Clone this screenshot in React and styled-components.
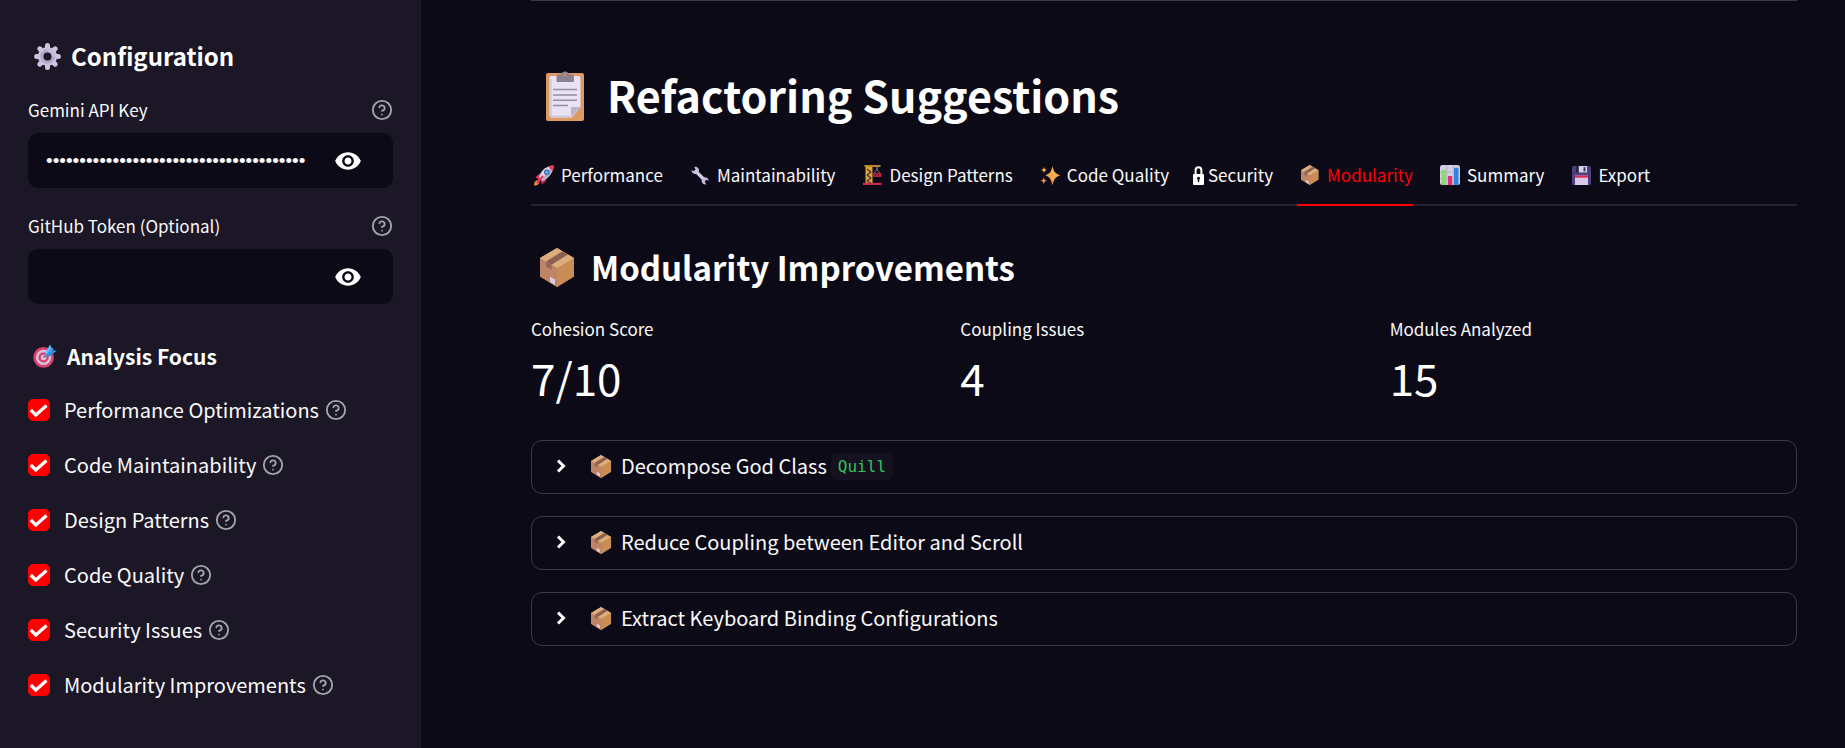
import React, { useId, useState } from "react";
import styled, { createGlobalStyle } from "styled-components";
import { MdVisibility } from "react-icons/md";

const color = {
  page: "#0d0a18",
  panel: "#1b1727",
  text: "#fafafa",
  heading: "#ffffff",
  line: "#252330",
  border: "#3d3a48",
  accent: "#ff0000",
  muted: "#a5a3ab",
  code: "#2fc45c",
};

const sans = `"Noto Sans CJK SC", "Noto Sans", sans-serif`;
const mono = `"DejaVu Sans Mono", monospace`;

const GlobalStyle = createGlobalStyle`
  *, *::before, *::after { box-sizing: border-box; }
  body {
    margin: 0;
    background: ${color.page};
    color: ${color.text};
    font-family: ${sans};
    font-size: 20px;
  }
  button, input { font: inherit; color: inherit; }
`;

/* ---------- layout ---------- */

const Page = styled.div`
  display: grid;
  grid-template-columns: 421px minmax(0, 1fr);
  min-height: 100vh;
`;

const Sidebar = styled.aside`
  background: ${color.panel};
  padding: 41px 28px 28px;
`;

const Main = styled.main`
  padding: 0 48px 48px 110px;
`;

const Divider = styled.hr`
  margin: 0 0 63px;
  border: 0;
  border-top: 1px solid ${color.border};
`;

/* ---------- headings ---------- */

const Title = styled.h1`
  display: flex;
  align-items: center;
  gap: 8px;
  margin: 0 0 22px;
  font-size: 43px;
  line-height: 60px;
  font-weight: 700;
  color: ${color.heading};
`;

const SectionTitle = styled.h2`
  display: flex;
  align-items: center;
  gap: 8px;
  margin: 39px 0 27px;
  font-size: 33px;
  line-height: 44px;
  font-weight: 700;
  color: ${color.heading};
`;

const SideTitle = styled.h2`
  display: flex;
  align-items: center;
  gap: 4px;
  margin: 0 0 26px;
  font-size: 24px;
  line-height: 30px;
  font-weight: 700;
  color: ${color.heading};
`;

const SideSubtitle = styled(SideTitle).attrs({ as: "h3" })`
  gap: 5px;
  margin: 37px 0 22px;
  font-size: 21px;
`;

const EmojiBox = styled.span`
  display: inline-flex;
  flex: none;
  align-items: center;
  justify-content: center;
  width: ${(p) => p.$box}px;

  svg {
    display: block;
    height: ${(p) => p.$height}px;
    width: auto;
  }
`;

/* ---------- sidebar controls ---------- */

const FieldList = styled.div`
  display: grid;
  gap: 25px;
`;

const Field = styled.div`
  display: grid;
  gap: 10px;
`;

const FieldHead = styled.div`
  display: flex;
  align-items: center;
  justify-content: space-between;
  height: 26px;
`;

const FieldLabel = styled.label`
  font-size: 17px;
  line-height: 26px;
`;

const InputBox = styled.div`
  display: flex;
  align-items: center;
  height: 55px;
  padding: 0 31px 0 18px;
  border-radius: 10px;
  background: ${color.page};
`;

const SecretInput = styled.input`
  flex: 1;
  min-width: 0;
  padding: 0;
  border: 0;
  outline: 0;
  background: transparent;
  font-family: "Liberation Sans", sans-serif;
  font-size: 19px;
  line-height: 30px;
`;

const IconButton = styled.button`
  display: inline-flex;
  flex: none;
  padding: 0;
  border: 0;
  background: transparent;
  color: ${(p) => (p.$muted ? color.muted : color.heading)};
  cursor: pointer;
`;

const CheckList = styled.div`
  display: grid;
  gap: 22px;
`;

const CheckRow = styled.div`
  display: flex;
  align-items: center;
  gap: 6px;
  height: 33px;
`;

const CheckLabel = styled.label`
  display: flex;
  align-items: center;
  gap: 14px;
  line-height: 33px;
  cursor: pointer;
`;

const CheckMark = styled.span`
  display: grid;
  width: 22px;
  height: 22px;

  > * {
    grid-area: 1 / 1;
  }

  svg {
    pointer-events: none;
  }
`;

const CheckInput = styled.input`
  appearance: none;
  width: 22px;
  height: 22px;
  margin: 0;
  border: 1px solid ${color.border};
  border-radius: 5px;
  background: ${color.page};

  &:checked {
    border-color: ${color.accent};
    background: ${color.accent};
  }

  &:not(:checked) + svg {
    display: none;
  }
`;

/* ---------- tabs ---------- */

const TabList = styled.div`
  display: flex;
  gap: 24px;
  box-shadow: inset 0 -2px ${color.line};
`;

const Tab = styled.button`
  display: flex;
  align-items: center;
  gap: 4px;
  padding: 16px 0;
  border: 0;
  border-bottom: 2px solid ${(p) => (p.$active ? color.accent : "transparent")};
  background: transparent;
  color: ${(p) => (p.$active ? color.accent : color.text)};
  font-size: 17px;
  line-height: 26px;
  white-space: nowrap;
  cursor: pointer;
`;

/* ---------- metrics ---------- */

const Metrics = styled.dl`
  display: grid;
  grid-template-columns: repeat(3, minmax(0, 1fr));
  gap: 22px;
  margin: 0 0 36px;
`;

const Metric = styled.div`
  display: grid;
  gap: 8px;
`;

const MetricLabel = styled.dt`
  font-size: 17px;
  line-height: 26px;
`;

const MetricValue = styled.dd`
  margin: 0;
  font-size: 44px;
  line-height: 54px;
  color: ${color.heading};
`;

/* ---------- expanders ---------- */

const Suggestions = styled.div`
  display: grid;
  gap: 22px;
`;

const Expander = styled.details`
  border: 1px solid ${color.border};
  border-radius: 11px;
`;

const ExpanderHead = styled.summary`
  display: flex;
  align-items: center;
  gap: 4px;
  padding: 10px 16px 12px;
  line-height: 30px;
  list-style: none;
  cursor: pointer;
`;

const Chevron = styled.svg`
  flex: none;
  width: 26px;
  height: 26px;
  margin-right: 8px;
  fill: none;
  stroke: ${color.heading};
  stroke-width: 3px;

  details[open] & {
    transform: rotate(90deg);
  }
`;

const Code = styled.code`
  padding: 0 7px;
  border-radius: 6px;
  background: #15111f;
  color: ${color.code};
  font-family: ${mono};
  font-size: 16px;
  line-height: 27px;
`;

/* ---------- drawings ---------- */

const GearIcon = () => (
  <svg viewBox="0 0 27 27" aria-hidden="true">
    <g stroke="#cfc3e2" strokeWidth="5" strokeLinecap="round">
      <path d="M13.5 2.6v21.8M2.6 13.5h21.8M5.8 5.8l15.4 15.4M21.2 5.8L5.8 21.2" />
    </g>
    <circle cx="13.5" cy="13.5" r="9.6" fill="#cdc1df" />
    <circle cx="13.5" cy="13.5" r="7.2" fill="#b3a6c6" />
    <path d="M13.5 6.3a7.2 7.2 0 0 1 7.2 7.2h-7.2z" fill="#c6bad8" />
    <circle cx="13.5" cy="13.5" r="4" fill={color.panel} />
  </svg>
);

const TargetIcon = () => (
  <svg viewBox="0 0 25 25" aria-hidden="true">
    <circle cx="11" cy="14" r="10.8" fill="#d9416f" />
    <circle cx="11" cy="14" r="8" fill="#d6c4dc" />
    <circle cx="11" cy="14" r="5.4" fill="#d9416f" />
    <circle cx="11" cy="14" r="2.9" fill="#d6c4dc" />
    <path d="M11 14l7-7" stroke="#4a6d96" strokeWidth="1.6" />
    <path d="M12.6 9.8L17.8.6l1.4 3.6L13 12.6z" fill="#5ec0ff" />
    <path d="M13 12.6l6.2-6.4 5.6.8-7.6 6z" fill="#2e8fe6" />
    <path d="M13 12l6.8-8.6 1.6 2z" fill="#46a5f5" />
  </svg>
);

const ClipboardIcon = () => (
  <svg viewBox="0 -3 38 53" aria-hidden="true">
    <rect y="2" width="38" height="48" rx="2" fill="#dd9a62" />
    <path d="M3.5 7a2 2 0 0 1 2-2h27a2 2 0 0 1 2 2v29L26 46.500H5.500a2 2 0 0 1-2-2z" fill="#e8e2f4" />
    <path d="M3.500 8v36.500a2 2 0 0 0 2 2H24v-2H7a2 2 0 0 1-1.500-2V8z" fill="#cfc6e2" />
    <path d="M34.500 36L25 46.500V37a1 1 0 0 1 1-1z" fill="#bdb3ce" />
    <path d="M10.500 11V6.500a3 3 0 0 1 3-3H15A4.200 4.200 0 0 1 23 3.500h2a3 3 0 0 1 3 3V11z" fill="#8c818f" />
    <circle cx="19" cy="3.600" r="1.600" fill="#c58e68" />
    <path d="M7 18.500h24M7 24h24M7 29.300h24M7 34.500h15" stroke="#968ca3" strokeWidth="1.600" />
  </svg>
);

const PackageIcon = () => (
  <svg viewBox="0 0 34 39" aria-hidden="true">
    <path d="M17 0l17 10v18.500L17 39 0 28.500V10z" fill="#c58a5c" />
    <path d="M0 10l17 10v19L0 28.500z" fill="#bd8466" />
    <path d="M17 20l17-10v18.500L17 39z" fill="#c98c55" />
    <path d="M17 0l17 10-17 10L0 10z" fill="#dcae7e" />
    <path d="M22.500 3.200l5.500 3.300-16.500 10.300L6 13.500z" fill="#8c6051" />
    <path d="M6 13.500l5.500 3.300v5L6 18.500z" fill="#94695a" />
    <path d="M10 28.500l5 3v5.500l-5-3z" fill="#ddcbdc" />
  </svg>
);

const RocketIcon = () => (
  <svg viewBox="0 0 20 21" aria-hidden="true">
    <path d="M1.500 12L6 8.500l3.500 2-4 5z" fill="#e8315e" />
    <path d="M8 19.500l4-3.500-.5-4.500-5 4z" fill="#c22a58" />
    <path d="M0 20.500c0-3 1-5 3.500-5.500l2 2C5 19.500 3 21 0 20.500z" fill="#f2852f" />
    <path d="M5 12C7 6 11 2 17 .8L19.300 3C18 9 14 13.500 8.500 16z" fill="#d9d4e6" />
    <path d="M8.500 16C14 13.500 18 9 19.300 3l-1.200-1.200L7 14.500z" fill="#b5aecb" />
    <path d="M14 1.700C15.800.8 18 .2 20 .3c0 1.900-.5 4-1.300 5.700z" fill="#f03b61" />
    <circle cx="12.800" cy="7.200" r="2.700" fill="#3b5f96" />
    <circle cx="12.800" cy="7.200" r="1.700" fill="#5db1f5" />
    <path d="M3.500 17.500l5-6" stroke="#e8315e" strokeWidth="2" strokeLinecap="round" />
  </svg>
);

const WrenchIcon = () => (
  <svg viewBox="0 0 18 19" aria-hidden="true">
    <path d="M5 5.500l8.500 8.500" stroke="#d5cbe6" strokeWidth="3.200" />
    <path
      d="M3.200.8C5.500.3 7.800 1.600 8 4.200 8.200 6.500 6.500 8 4.600 8 2.500 8 .6 6.500.3 4L2.800 5.300 4.600 3.600z"
      fill="#cdc3df"
    />
    <path
      d="M15.200 18.500C12.500 18.600 10.600 17 10.600 14.800c0-2 1.400-3.500 3.400-3.500 2 0 3.500 1.300 3.700 3.500l-2.200-1-1.800 1.800z"
      fill="#c6bbda"
    />
  </svg>
);

const CraneIcon = () => (
  <svg viewBox="0 0 19 20" aria-hidden="true">
    <path d="M1.500 0h16v2h-16z" fill="#b98a2d" />
    <path d="M3 2h6v16H3z" fill="#e0a436" />
    <path d="M4 4l4 3-4 3 4 3-4 3 4 2" stroke="#4b3140" strokeWidth="1.300" fill="none" />
    <path d="M3 2v16M9 2v16" stroke="#dba33b" strokeWidth="1" />
    <path d="M14 2v3" stroke="#8d86a0" strokeWidth="1.200" />
    <path d="M14 4.500l-3.200 4h6.400z" stroke="#77708c" fill="none" />
    <path d="M10 8h8.500v4H10z" fill="#b3213f" />
    <path d="M12.500 9v2M15.500 9v2" stroke="#6f1730" />
    <path d="M0 17.800h18.500V20H0z" fill="#c72d4a" />
  </svg>
);

const SparklesIcon = () => (
  <svg viewBox="0 0 20 19" aria-hidden="true">
    <path d="M12.500 0c1 5 2.500 7.700 7.500 9.200-5 1.500-6.500 4.800-7.500 9.800-1-5-2.300-8.300-7-9.800 4.700-1.500 6-4.200 7-9.200z" fill="#fbb154" />
    <path d="M12.500 19c-1-5-2.300-8.300-7-9.800H20c-5 1.500-6.500 4.800-7.500 9.800z" fill="#f79a52" />
    <path d="M12.500 4c.5 3 1.500 4.500 4 5.200-2.500.8-3.500 2.800-4 5.800-.5-3-1.500-5-4-5.800 2.500-.7 3.500-2.200 4-5.200z" fill="#f9ab54" />
    <path d="M4 .8c.4 1.900.9 2.700 3 3.200-2.100.5-2.600 1.300-3 3.200-.4-1.900-.9-2.700-3-3.200 2.100-.5 2.600-1.300 3-3.200z" fill="#f6ae4e" />
    <path d="M3.800 11.200c.4 2.100.9 3 3 3.500-2.100.5-2.600 1.400-3 3.500-.4-2.100-.9-3-3.300-3.500 2.400-.5 2.900-1.400 3.300-3.500z" fill="#f08a55" />
  </svg>
);

const LockIcon = () => (
  <svg viewBox="0 0 11 19" aria-hidden="true">
    <path d="M2.600 9V4.200a2.900 2.900 0 0 1 5.800 0V9" stroke="#fff" strokeWidth="2" fill="none" />
    <rect y="8" width="11" height="11" rx="1" fill="#fff" />
    <circle cx="5.500" cy="12.300" r="1.500" fill={color.page} />
    <path d="M5.500 12.500V16" stroke={color.page} strokeWidth="1.400" />
  </svg>
);

const ChartIcon = () => (
  <svg viewBox="0 0 20 20" aria-hidden="true">
    <rect width="20" height="20" rx="2.500" fill="#d6cee4" />
    <path d="M0 7h20M0 13.500h20M6.800 0v20M13.300 0v20" stroke="#b4aac6" strokeWidth=".8" />
    <path d="M1.500 5h4.300v15H2.500a1 1 0 0 1-1-1z" fill="#86e05f" />
    <path d="M8 11h4.200v9H8z" fill="#e12f6d" />
    <path d="M14 2.800h4.500V19a1 1 0 0 1-1 1H14z" fill="#2f86dc" />
  </svg>
);

const FloppyIcon = () => (
  <svg viewBox="0 0 19 19" aria-hidden="true">
    <path d="M1.500 0h16L19 1.500v16a1.500 1.500 0 0 1-1.500 1.500h-16A1.500 1.500 0 0 1 0 17.500v-16A1.500 1.500 0 0 1 1.500 0z" fill="#4f3f7f" />
    <path d="M4 0h11v6.500H4z" fill="#2c2345" />
    <path d="M6.800 0H15v6.500H6.800z" fill="#d9d2ea" />
    <path d="M11.500 1.200h2v4.200h-2z" fill="#3d3068" />
    <path d="M3 9.500h13V19H3z" fill="#d8c8ea" />
    <path d="M3 9.500h13v2.200H3z" fill="#e02d55" />
  </svg>
);

const HelpIcon = () => (
  <svg
    width="22"
    height="22"
    viewBox="0 0 24 24"
    fill="none"
    stroke="currentColor"
    strokeWidth="2"
    strokeLinecap="round"
    strokeLinejoin="round"
    aria-hidden="true"
  >
    <circle cx="12" cy="12" r="10" />
    <path d="M9.090 9a3 3 0 0 1 5.830 1c0 2-3 3-3 3M12 17h.010" />
  </svg>
);

/* ---------- parts ---------- */

const Emoji = ({ icon: Icon, box, height }) => (
  <EmojiBox $box={box} $height={height}>
    <Icon />
  </EmojiBox>
);

const Help = ({ topic }) => (
  <IconButton type="button" $muted aria-label={`Help for ${topic}`}>
    <HelpIcon />
  </IconButton>
);

const SecretField = ({ label, initial }) => {
  const id = useId();
  const [value, setValue] = useState(initial);
  const [shown, setShown] = useState(false);
  return (
    <Field>
      <FieldHead>
        <FieldLabel htmlFor={id}>{label}</FieldLabel>
        <Help topic={label} />
      </FieldHead>
      <InputBox>
        <SecretInput
          id={id}
          type={shown ? "text" : "password"}
          autoComplete="off"
          value={value}
          onChange={(e) => setValue(e.target.value)}
        />
        <IconButton type="button" aria-label="Show or hide text" onClick={() => setShown(!shown)}>
          <MdVisibility size={28} />
        </IconButton>
      </InputBox>
    </Field>
  );
};

const CheckOption = ({ label }) => (
  <CheckRow>
    <CheckLabel>
      <CheckMark>
        <CheckInput type="checkbox" defaultChecked />
        <svg width="22" height="22" viewBox="0 0 22 22" aria-hidden="true">
          <path d="M2.800 11l5 5L18.500 6.500" fill="none" stroke="#fff" strokeWidth="3.200" />
        </svg>
      </CheckMark>
      {label}
    </CheckLabel>
    <Help topic={label} />
  </CheckRow>
);

const focusAreas = [
  "Performance Optimizations",
  "Code Maintainability",
  "Design Patterns",
  "Code Quality",
  "Security Issues",
  "Modularity Improvements",
];

const tabs = [
  { label: "Performance", icon: RocketIcon, box: 26, height: 21 },
  { label: "Maintainability", icon: WrenchIcon, box: 26, height: 19 },
  { label: "Design Patterns", icon: CraneIcon, box: 26, height: 20 },
  { label: "Code Quality", icon: SparklesIcon, box: 26, height: 19 },
  { label: "Security", icon: LockIcon, box: 11, height: 19 },
  { label: "Modularity", icon: PackageIcon, box: 26, height: 20 },
  { label: "Summary", icon: ChartIcon, box: 26, height: 20 },
  { label: "Export", icon: FloppyIcon, box: 26, height: 19 },
];

const metrics = [
  { label: "Cohesion Score", value: "7/10" },
  { label: "Coupling Issues", value: "4" },
  { label: "Modules Analyzed", value: "15" },
];

const suggestions = [
  { title: "Decompose God Class", code: "Quill" },
  { title: "Reduce Coupling between Editor and Scroll" },
  { title: "Extract Keyboard Binding Configurations" },
];

export default function App() {
  const [active, setActive] = useState("Modularity");
  return (
    <>
      <GlobalStyle />
      <Page>
        <Sidebar>
          <SideTitle>
            <Emoji icon={GearIcon} box={39} height={27} />
            Configuration
          </SideTitle>
          <FieldList>
            <SecretField label="Gemini API Key" initial={"x".repeat(39)} />
            <SecretField label="GitHub Token (Optional)" initial="" />
          </FieldList>
          <SideSubtitle>
            <Emoji icon={TargetIcon} box={34} height={24} />
            Analysis Focus
          </SideSubtitle>
          <CheckList>
            {focusAreas.map((label) => (
              <CheckOption key={label} label={label} />
            ))}
          </CheckList>
        </Sidebar>

        <Main>
          <Divider />
          <Title>
            <Emoji icon={ClipboardIcon} box={68} height={53} />
            Refactoring Suggestions
          </Title>

          <TabList role="tablist">
            {tabs.map(({ label, icon, box, height }) => (
              <Tab
                key={label}
                type="button"
                role="tab"
                aria-selected={active === label}
                $active={active === label}
                onClick={() => setActive(label)}
              >
                <Emoji icon={icon} box={box} height={height} />
                {label}
              </Tab>
            ))}
          </TabList>

          <SectionTitle>
            <Emoji icon={PackageIcon} box={52} height={39} />
            Modularity Improvements
          </SectionTitle>

          <Metrics>
            {metrics.map(({ label, value }) => (
              <Metric key={label}>
                <MetricLabel>{label}</MetricLabel>
                <MetricValue>{value}</MetricValue>
              </Metric>
            ))}
          </Metrics>

          <Suggestions>
            {suggestions.map(({ title, code }) => (
              <Expander key={title}>
                <ExpanderHead>
                  <Chevron viewBox="0 0 26 26" aria-hidden="true">
                    <path d="M10 7.500l5.500 5.500L10 18.500" />
                  </Chevron>
                  <Emoji icon={PackageIcon} box={31} height={23} />
                  {title}
                  {code && <Code>{code}</Code>}
                </ExpanderHead>
              </Expander>
            ))}
          </Suggestions>
        </Main>
      </Page>
    </>
  );
}
